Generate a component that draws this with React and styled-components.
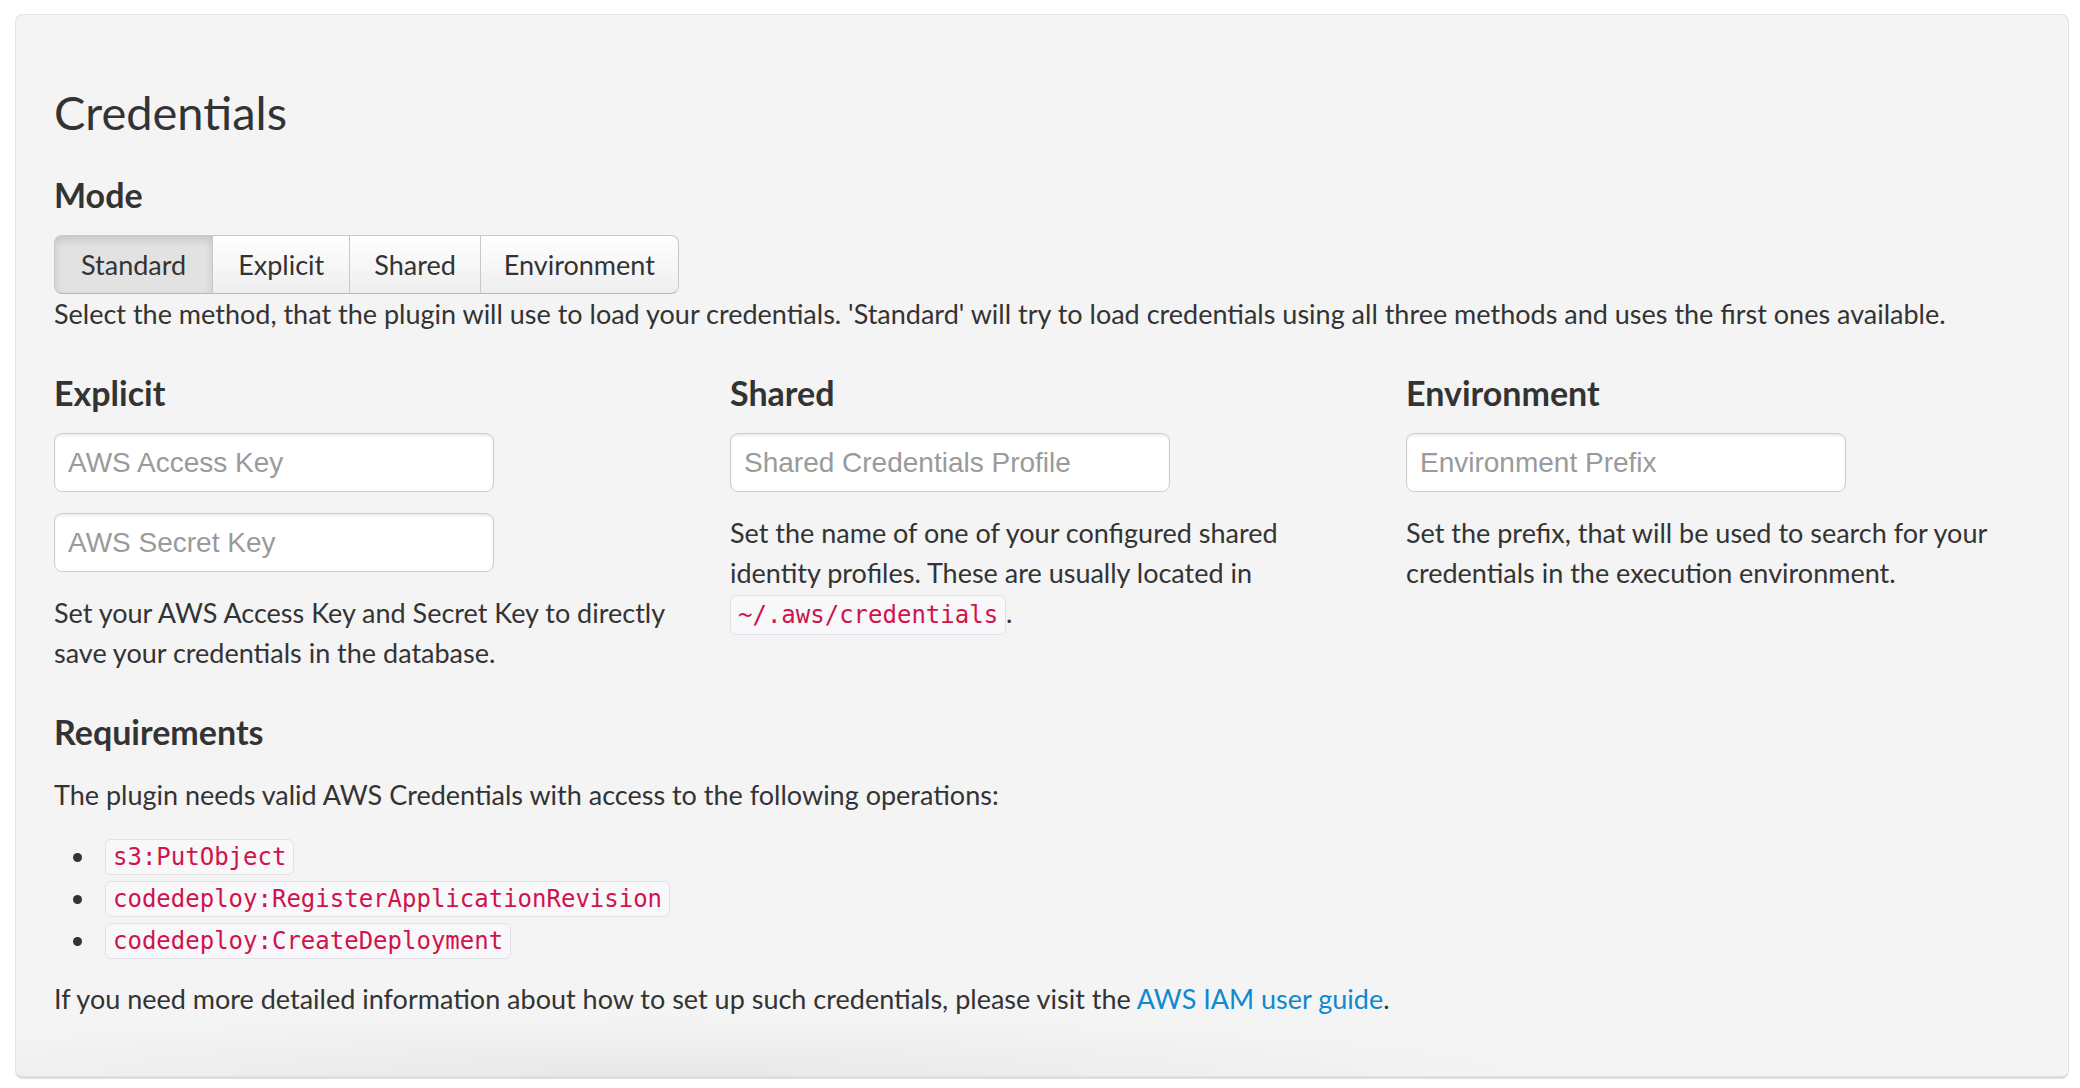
import React from 'react';
import styled, { createGlobalStyle } from 'styled-components';

const GlobalStyle = createGlobalStyle`
  html, body {
    margin: 0;
    padding: 0;
    background: #ffffff;
  }
  body {
    font-family: Lato, "Open Sans", sans-serif;
    color: #333333;
  }
  * {
    box-sizing: border-box;
  }
`;

const Page = styled.div`
  padding: 14px 11px 9px 15px;
`;

const Panel = styled.section`
  height: 1065px;
  background-color: #f4f4f4;
  background-image: radial-gradient(
    ellipse 900px 60px at 640px 100%,
    rgba(0, 0, 0, 0.05),
    rgba(0, 0, 0, 0)
  );
  border: 1px solid #e2e2e2;
  border-bottom: 3px solid #dedede;
  border-radius: 8px;
  padding: 70px 46px 0 38px;
  font-size: 27px;
  line-height: 40px;
`;

const Title = styled.h2`
  margin: 0;
  font-size: 47px;
  font-weight: 400;
  line-height: 54px;
  color: #333;
`;

const Heading = styled.h4`
  margin: ${({ top }) => top || 0}px 0 0;
  font-size: 34px;
  font-weight: 700;
  line-height: 36px;
  color: #333;
`;

const ButtonGroup = styled.div`
  display: inline-flex;
  margin-top: 22px;
  border-radius: 8px;
`;

const ModeButton = styled.button`
  height: 59px;
  padding: 0 ${({ pad }) => pad || 25}px;
  font-family: inherit;
  font-size: 27px;
  color: #333;
  border: 1px solid #c8c8c8;
  border-left-width: 0;
  background: ${({ active }) =>
    active ? '#e2e2e2' : 'linear-gradient(to bottom, #ffffff 0%, #eeeeee 100%)'};
  box-shadow: ${({ active }) =>
    active ? 'inset 0 4px 8px rgba(0, 0, 0, 0.12)' : 'none'};
  border-bottom-color: #b8b8b8;
  cursor: pointer;

  &:first-child {
    border-left-width: 1px;
    border-radius: 8px 0 0 8px;
  }
  &:last-child {
    border-radius: 0 8px 8px 0;
  }
`;

const HelpText = styled.p`
  margin: 0;
  color: #333;
`;

const Columns = styled.div`
  display: grid;
  grid-template-columns: repeat(3, 1fr);
  column-gap: 60px;
  margin-top: 41px;
`;

const Column = styled.div`
  display: flex;
  flex-direction: column;
`;

const Input = styled.input`
  width: 440px;
  height: 59px;
  margin-top: ${({ first }) => (first ? 22 : 21)}px;
  padding: 0 13px;
  font-family: "Liberation Sans", Arial, sans-serif;
  font-size: 28px;
  color: #555;
  background: #fff;
  border: 1px solid #cccccc;
  border-radius: 8px;
  box-shadow: inset 0 2px 2px rgba(0, 0, 0, 0.08);
  outline: none;

  &::placeholder {
    color: #9a9a9a;
  }
`;

const ColumnHelp = styled(HelpText)`
  margin-top: 21px;
  white-space: nowrap;
`;

const Code = styled.code`
  font-family: "DejaVu Sans Mono", "Liberation Mono", monospace;
  font-size: 24px;
  line-height: 1;
  color: #d0134b;
  background: #f8f7fa;
  border: 1px solid #e2e2e8;
  border-radius: 6px;
  padding: 5px 7px;
`;

const Paragraph = styled.p`
  margin: ${({ top }) => top || 0}px 0 0;
`;

const OperationList = styled.ul`
  margin: 21px 0 0;
  padding-left: 19px;
  list-style: none;
`;

const Operation = styled.li`
  display: flex;
  align-items: center;
  gap: 23px;
  height: 42px;

  &::before {
    content: '';
    width: 9px;
    height: 9px;
    border-radius: 50%;
    background: #333;
  }
`;

const Link = styled.a`
  color: #0f89cf;
  text-decoration: none;
`;

const operations = [
  's3:PutObject',
  'codedeploy:RegisterApplicationRevision',
  'codedeploy:CreateDeployment',
];

export default function App() {
  return (
    <Page>
      <GlobalStyle />
      <Panel>
        <Title>Credentials</Title>
        <Heading top={38}>Mode</Heading>
        <ButtonGroup>
          <ModeButton active pad={26}>Standard</ModeButton>
          <ModeButton>Explicit</ModeButton>
          <ModeButton pad={24}>Shared</ModeButton>
          <ModeButton pad={23}>Environment</ModeButton>
        </ButtonGroup>
        <HelpText>
          Select the method, that the plugin will use to load your credentials. 'Standard' will
          try to load credentials using all three methods and uses the first ones available.
        </HelpText>

        <Columns>
          <Column>
            <Heading>Explicit</Heading>
            <Input first placeholder="AWS Access Key" />
            <Input placeholder="AWS Secret Key" />
            <ColumnHelp>
              Set your AWS Access Key and Secret Key to directly
              <br />
              save your credentials in the database.
            </ColumnHelp>
          </Column>
          <Column>
            <Heading>Shared</Heading>
            <Input first placeholder="Shared Credentials Profile" />
            <ColumnHelp>
              Set the name of one of your configured shared
              <br />
              identity profiles. These are usually located in
              <br />
              <Code>~/.aws/credentials</Code>.
            </ColumnHelp>
          </Column>
          <Column>
            <Heading>Environment</Heading>
            <Input first placeholder="Environment Prefix" />
            <ColumnHelp>
              Set the prefix, that will be used to search for your
              <br />
              credentials in the execution environment.
            </ColumnHelp>
          </Column>
        </Columns>

        <Heading top={41}>Requirements</Heading>
        <Paragraph top={25}>
          The plugin needs valid AWS Credentials with access to the following operations:
        </Paragraph>
        <OperationList>
          {operations.map((op) => (
            <Operation key={op}>
              <Code>{op}</Code>
            </Operation>
          ))}
        </OperationList>
        <Paragraph top={17}>
          If you need more detailed information about how to set up such credentials, please
          visit the <Link href="#">AWS IAM user guide</Link>.
        </Paragraph>
      </Panel>
    </Page>
  );
}
